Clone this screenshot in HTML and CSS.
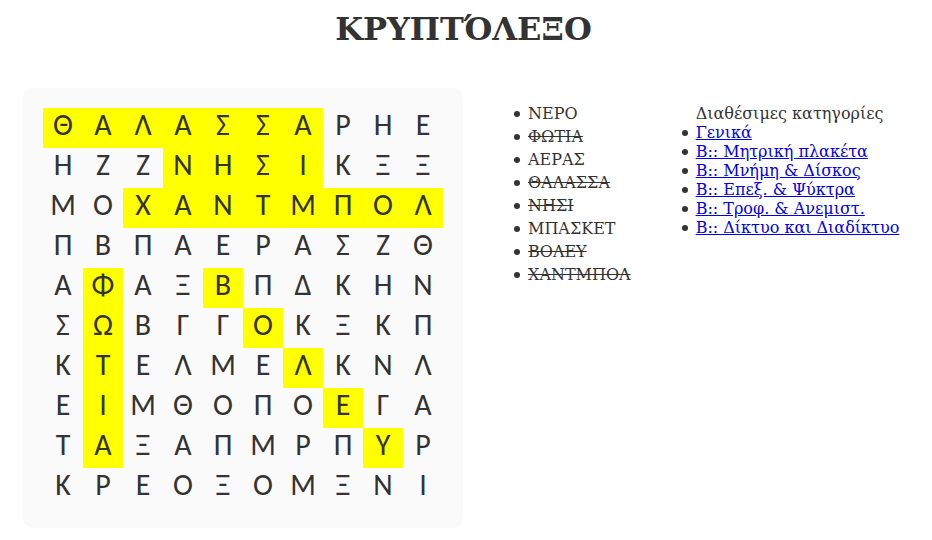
FILE: index.html
```html
<!DOCTYPE html>
<html lang="el">
<head>
<meta charset="utf-8">
<title>Κρυπτόλεξο</title>
<link rel="stylesheet" href="styles.css">
</head>
<body>
<h1>ΚΡΥΠΤΌΛΕΞΟ</h1>
<main class="game">
<table class="board"><tbody id="cells"></tbody></table>
<ul class="words">
<li>ΝΕΡΟ</li>
<li><s>ΦΩΤΙΑ</s></li>
<li>ΑΕΡΑΣ</li>
<li><s>ΘΑΛΑΣΣΑ</s></li>
<li><s>ΝΗΣΙ</s></li>
<li>ΜΠΑΣΚΕΤ</li>
<li><s>ΒΟΛΕΥ</s></li>
<li><s>ΧΑΝΤΜΠΟΛ</s></li>
</ul>
<nav class="categories">
<span>Διαθέσιμες κατηγορίες</span>
<ul>
<li><a href="#c1">Γενικά</a></li>
<li><a href="#c2">Β:: Μητρική πλακέτα</a></li>
<li><a href="#c3">Β:: Μνήμη &amp; Δίσκος</a></li>
<li><a href="#c4">Β:: Επεξ. &amp; Ψύκτρα</a></li>
<li><a href="#c5">Β:: Τροφ. &amp; Ανεμιστ.</a></li>
<li><a href="#c6">Β:: Δίκτυο και Διαδίκτυο</a></li>
</ul>
</nav>
</main>
<script src="script.js"></script>
</body>
</html>
```
FILE: styles.css
```css
body {
  margin: 8px;
  color: #333;
  background: #fff;
  font-family: "DejaVu Serif", serif;
  font-size: 16px;
  line-height: 19px;
}

h1 {
  margin: 0 5px 38px 0;
  font-size: 32px;
  line-height: 42px;
  text-align: center;
}

.game {
  display: flex;
  align-items: flex-start;
  margin-left: 15px;
}

.board {
  flex: none;
  padding: 20px;
  border-spacing: 0;
  border-radius: 10px;
  background: #fafafa;
  font-family: Carlito, Calibri, Lato, sans-serif;
  font-size: 30px;
  line-height: 34px;
}

.board td {
  width: 40px;
  height: 40px;
  padding: 0 0 6px;
  box-sizing: border-box;
  text-align: center;
}

.board .found {
  background: #ff0;
}

ul {
  margin: 0;
  padding: 0;
  list-style: none;
}

li::before {
  content: "";
  display: inline-block;
  width: 6px;
  height: 6px;
  margin: 0 8px 0 -14px;
  border-radius: 50%;
  background: #333;
  vertical-align: 2px;
}

.words {
  margin: 14px 0 0 65px;
  line-height: 23px;
}

.categories {
  margin: 16px 0 0 65px;
  white-space: nowrap;
}
```
FILE: script.js
```js
// An asterisk after a letter marks it as part of a found word.
const rows = [
  "Θ*Α*Λ*Α*Σ*Σ*Α*ΡΗΕ",
  "ΗΖΖΝ*Η*Σ*Ι*ΚΞΞ",
  "ΜΟΧ*Α*Ν*Τ*Μ*Π*Ο*Λ*",
  "ΠΒΠΑΕΡΑΣΖΘ",
  "ΑΦ*ΑΞΒ*ΠΔΚΗΝ",
  "ΣΩ*ΒΓΓΟ*ΚΞΚΠ",
  "ΚΤ*ΕΛΜΕΛ*ΚΝΛ",
  "ΕΙ*ΜΘΟΠΟΕ*ΓΑ",
  "ΤΑ*ΞΑΠΜΡΠΥ*Ρ",
  "ΚΡΕΟΞΟΜΞΝΙ"
];

const cells = document.getElementById("cells");
for (const row of rows) {
  const tr = cells.insertRow();
  for (const part of row.match(/.\*?/g)) {
    const td = tr.insertCell();
    td.textContent = part[0];
    if (part.length > 1) td.className = "found";
  }
}
```
